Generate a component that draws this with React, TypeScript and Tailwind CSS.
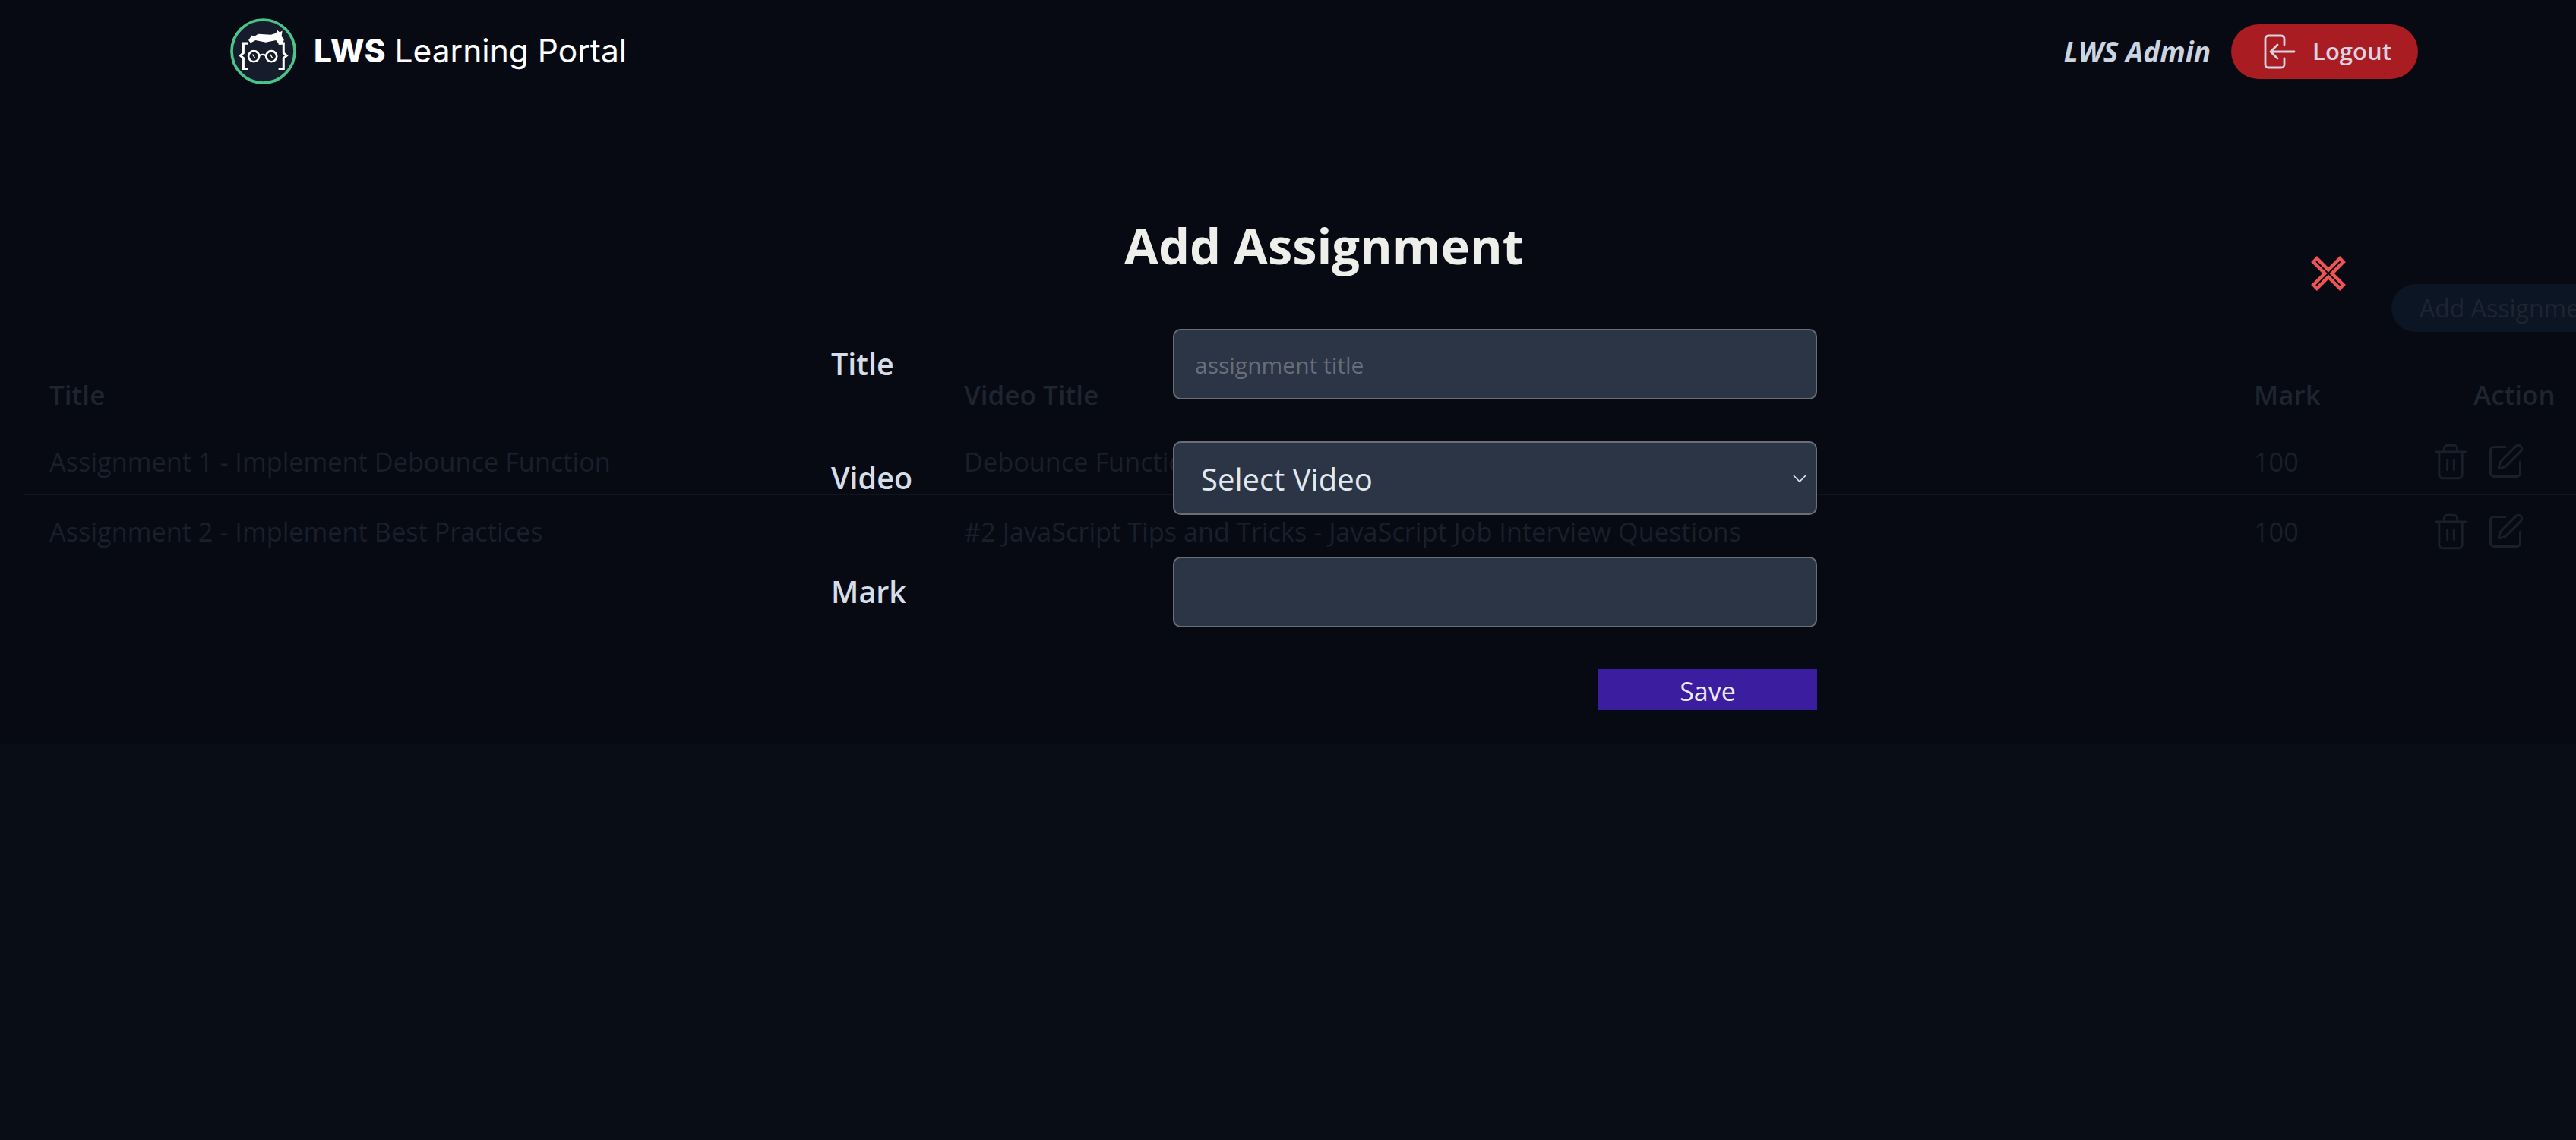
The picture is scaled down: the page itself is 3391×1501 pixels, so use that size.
import { SquarePen, Trash2 } from 'lucide-react';

const rows = [
  { title: 'Assignment 1 - Implement Debounce Function', video: 'Debounce Function in JavaScript - JavaScript Job Interview Questions', mark: 100 },
  { title: 'Assignment 2 - Implement Best Practices', video: '#2 JavaScript Tips and Tricks - JavaScript Job Interview Questions', mark: 100 },
];

const Logo = () => (
  <svg width="87" height="87" viewBox="10 13 260 260" className="shrink-0">
    <circle cx="140" cy="143" r="124" fill="#171c2c" stroke="#4ac489" strokeWidth="11" />
    <path d="M82 100l13-20 10 5 15-10 50 3 20-6 5-12 10 8 10-6-3 23 10 10-4 15-13 8-15-18-40 8-40-8-20 10z" fill="#fff" />
    <path d="M80 112H62v38l-12 10 12 10v42h18M200 112h20v38l12 10-12 10v42h-20" fill="none" stroke="#fff" strokeWidth="9" />
    <circle cx="103" cy="163" r="21" fill="none" stroke="#fff" strokeWidth="8" />
    <circle cx="172" cy="163" r="21" fill="none" stroke="#fff" strokeWidth="8" />
    <path d="M124 160c8-5 18-5 27 0" fill="none" stroke="#fff" strokeWidth="7" />
    <path d="M98 155l9 14M167 155l9 14" stroke="#fff" strokeWidth="4" />
  </svg>
);

const LogoutIcon = () => (
  <svg width="42" height="46" viewBox="0 0 42 46" fill="none" stroke="#dbd3e2" strokeWidth="2.8" strokeLinecap="round" strokeLinejoin="round">
    <path d="M27 14V6a4 4 0 0 0-4-4H6a4 4 0 0 0-4 4v34a4 4 0 0 0 4 4h17a4 4 0 0 0 4-4v-8" />
    <path d="M40 23H10M18 14l-9 9 9 9" />
  </svg>
);

const CloseIcon = () => (
  <svg width="50" height="50" viewBox="0 0 50 50" fill="none">
    <path d="M6 6l38 38M44 6 6 44" stroke="#ef5454" strokeWidth="11" />
    <path d="M9 9l32 32M41 9 9 41" stroke="#070a13" strokeWidth="2" />
  </svg>
);

const labelClass = 'w-[450px] shrink-0 text-[39.5px] font-semibold text-[#d5dde8]';
const fieldClass = 'w-[848px] rounded-[10px] border-2 border-[#6b6f75] bg-[#2c3545]';

export default function App() {
  return (
    <div className="min-h-screen overflow-hidden bg-[#090d15] font-['Open_Sans','Noto_Sans',sans-serif]">
      <div className="relative h-[980px] bg-[#070a13]">
        {/* nav */}
        <nav className="flex h-[135px] items-center justify-between pl-[303px] pr-[208px]">
          <div className="flex items-center gap-[23px]">
            <Logo />
            <p className="font-['Inter',sans-serif] text-[42.5px] leading-none text-white">
              <b className="font-extrabold">LWS</b> Learning Portal
            </p>
          </div>
          <div className="flex items-center gap-[27px]">
            <h2 className="text-[37px] font-bold italic text-[#cbd5e1]">LWS Admin</h2>
            <button className="flex h-[72px] w-[246px] items-center justify-center gap-[22px] rounded-full bg-[#a91d22] pl-[8px] text-[31px] font-semibold text-[#dbd3e2]">
              <LogoutIcon />
              Logout
            </button>
          </div>
        </nav>

        {/* assignment table behind the modal */}
        <section className="pl-[32px]">
          <div className="flex justify-end pt-[239px]">
            <button className="-mr-[100px] h-[63px] w-[343px] rounded-l-full bg-[#0b1524] pl-[37px] text-left text-[32px] font-medium whitespace-nowrap text-[#1e2530]">
              Add Assignment
            </button>
          </div>
          <div className="mt-[43px] text-[#1d2531]">
            <div className="flex h-[80px] items-center text-[35px] font-semibold">
              <span className="w-[1237px] pl-[33px]">Title</span>
              <span className="w-[1698px]">Video Title</span>
              <span className="w-[289px]">Mark</span>
              <span>Action</span>
            </div>
            {rows.map((row, i) => (
              <div key={row.title} className={`flex h-[92px] items-center pt-[4px] text-[34.3px] text-[#191f2b] ${i === 0 ? 'border-b border-[#11151f]' : ''}`}>
                <span className="w-[1237px] pl-[33px] whitespace-nowrap">{row.title}</span>
                <span className="w-[1698px] whitespace-nowrap">{row.video}</span>
                <span className="w-[233px]">{row.mark}</span>
                <span className="flex items-center gap-[20px]">
                  <Trash2 size={52} strokeWidth={1.4} />
                  <SquarePen size={52} strokeWidth={1.4} />
                </span>
              </div>
            ))}
          </div>
        </section>

        {/* modal */}
        <div className="absolute inset-x-0 top-0 pl-[1094px]">
          <button className="absolute top-[335px] left-[3040px]">
            <CloseIcon />
          </button>
          <div className="w-[1298px] pt-[278px]">
            <h2 className="text-center text-[65px] leading-[90px] font-bold text-[#eeeeea]">Add Assignment</h2>
            <form className="mt-[65px]">
              <div className="flex h-[93px] items-center pb-[0px]">
                <label className={`pt-[1px] ${labelClass}`}>Title</label>
                <input
                  placeholder="assignment title"
                  className={`h-full px-[27px] pt-[2px] text-[30px] text-white placeholder:text-[#666e7a] ${fieldClass}`}
                />
              </div>
              <div className="mt-[55px] flex h-[97px] items-center">
                <label className={`pt-[1px] ${labelClass}`}>Video</label>
                <div className="relative h-full w-[848px]">
                  <select className={`h-full appearance-none px-[35px] pt-[2px] text-[40px] text-[#e2e8f0] ${fieldClass}`}>
                    <option>Select Video</option>
                  </select>
                  <svg width="20" height="12" viewBox="0 0 20 12" fill="none" stroke="#e2e8f0" strokeWidth="1.6" className="absolute top-[43px] right-[13px]">
                    <path d="M2 2l8 8 8-8" />
                  </svg>
                </div>
              </div>
              <div className="mt-[55px] flex h-[93px] items-center">
                <label className={labelClass}>Mark</label>
                <input className={`h-full px-[27px] text-[30px] text-white ${fieldClass}`} />
              </div>
              <div className="mt-[55px] flex justify-end">
                <button type="button" className="h-[54px] w-[288px] bg-[#3b1ea0] text-[34px] leading-[58px] text-[#eceaf5]">
                  Save
                </button>
              </div>
            </form>
          </div>
        </div>
      </div>
    </div>
  );
}
